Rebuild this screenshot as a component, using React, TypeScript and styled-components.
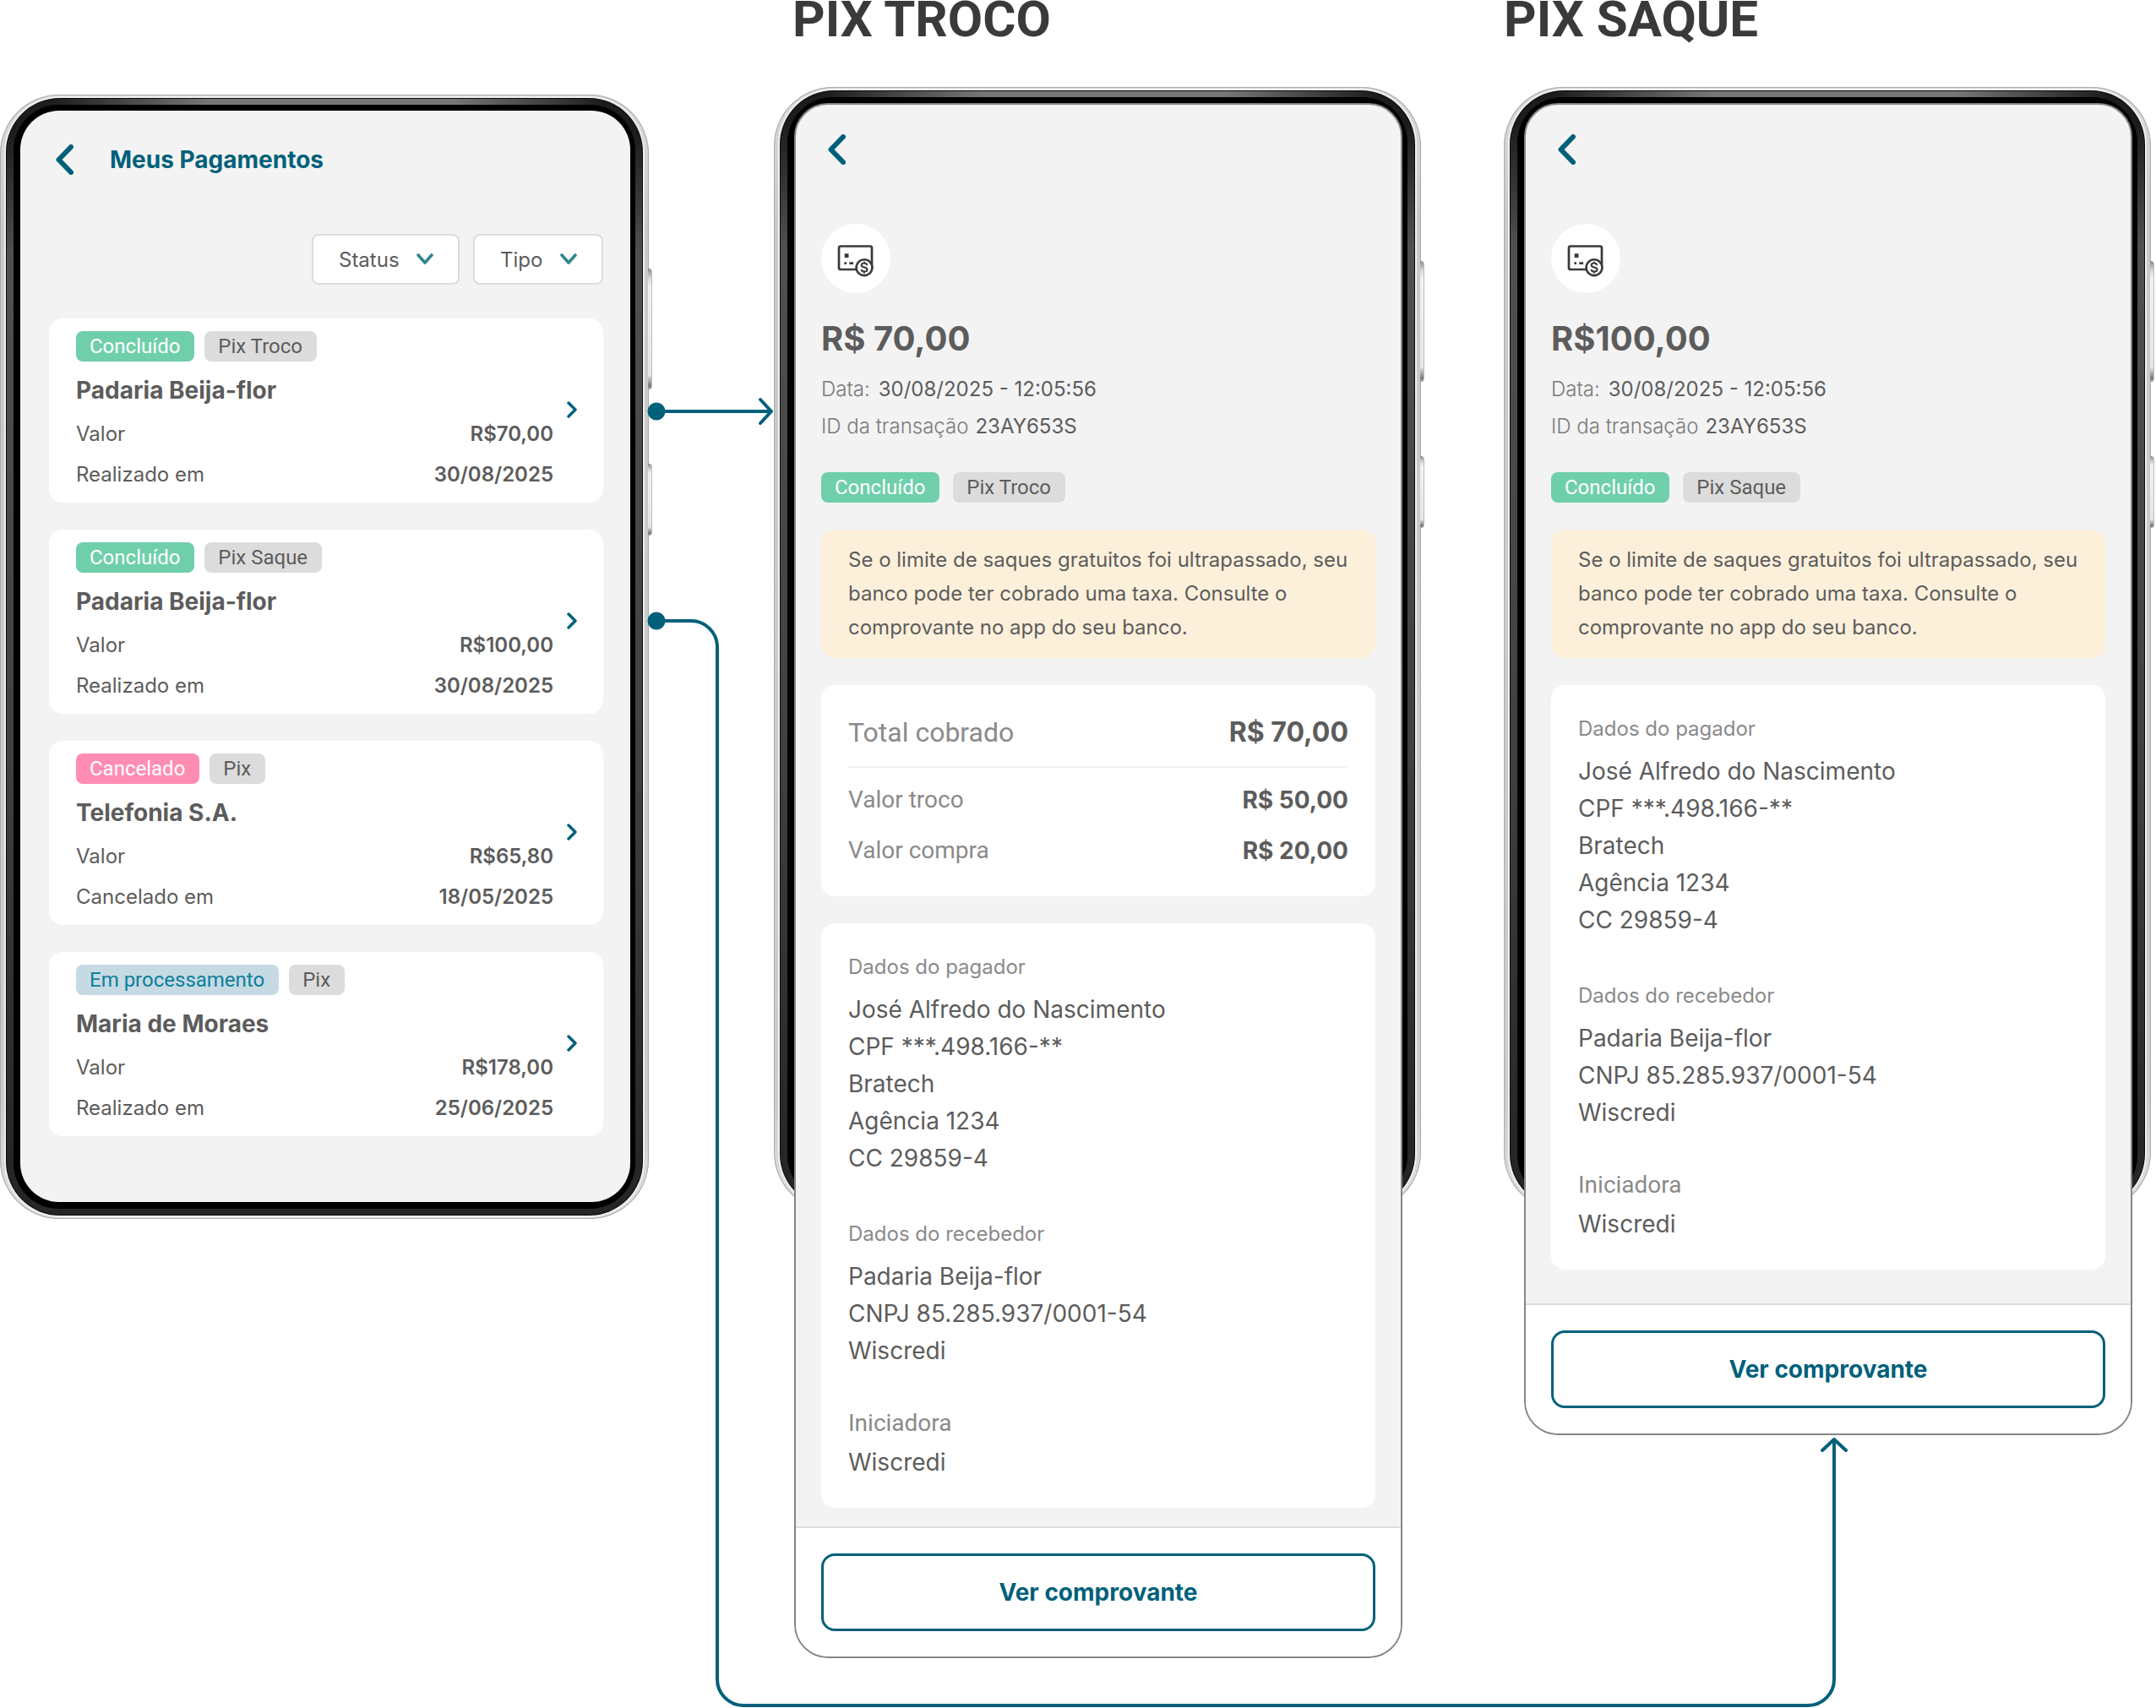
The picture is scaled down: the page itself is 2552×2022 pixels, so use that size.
import React from "react";
import styled, { createGlobalStyle, css } from "styled-components";

const color = {
  brand: "#00607a",
  text: "#5c5c5c",
  soft: "#7a7a7a",
  muted: "#8a8a8a",
  heading: "#3a3a3a",
  surface: "#f3f3f3",
  line: "#dcdcdc",
};

const GlobalStyle = createGlobalStyle`
  *, *::before, *::after { box-sizing: border-box; }
  body {
    margin: 0;
    background: #fff;
    color: ${color.text};
    font-family: Inter, "Liberation Sans", sans-serif;
    font-size: 24px;
  }
  h1, h2, h3, p, dl, dd, ul { margin: 0; padding: 0; }
  button, select { font: inherit; color: inherit; }
`;

/* ---------- board ---------- */

const Board = styled.main`
  position: relative;
  display: grid;
  grid-template-columns: 774fr 142fr 772fr 92fr 772fr;
  align-items: start;
  padding-bottom: 59px;
`;

const Column = styled.section<{ $track: number }>`
  grid-column: ${(p) => p.$track};
  min-width: 0;
  padding-right: 6px;
`;

const ListColumn = styled(Column)`
  padding-top: 112px;
`;

const FlowTitle = styled.h2<{ $indent?: boolean }>`
  margin-bottom: 57px;
  padding-left: ${(p) => (p.$indent ? 22 : 0)}px;
  font-family: Roboto, "Liberation Sans", sans-serif;
  font-size: 60px;
  font-weight: 700;
  line-height: 46px;
  color: ${color.heading};
`;

const Connectors = styled.svg`
  position: absolute;
  inset: 0;
  width: 100%;
  height: 100%;
  pointer-events: none;
`;

/* ---------- phone hardware ---------- */

const Body = styled.div`
  position: relative;
  padding: 4px 7px;
  border-radius: 70px;
  background: linear-gradient(180deg, #dcdcdc, #c9c9c9 12%, #cccccc 90%, #e2e2e2);
  box-shadow: inset 0 0 0 1px #aaa;
`;

const Rim = styled.div`
  height: 100%;
  padding: 8px 9px;
  border-radius: 64px;
  background:
    linear-gradient(90deg, #1c1c1c 7%, #777 32%, #777 70%, #1c1c1c 94%) top / 100% 9px no-repeat,
    linear-gradient(180deg, #1c1c1c 3%, #505050 14%, #404040 60%, #262626 96%);
  box-shadow: 0 0 0 2px #efefef, inset 0 0 0 1px #0a0a0a;
`;

const Glass = styled.div`
  height: 100%;
  padding: 7px 6px 8px 8px;
  border-radius: 54px;
  background: #000;
`;

const SideKey = styled.span<{ $top: number; $length: number }>`
  position: absolute;
  top: ${(p) => p.$top}px;
  right: -4px;
  width: 5px;
  height: ${(p) => p.$length}px;
  border-right: 1px solid #bdbdbd;
  border-radius: 0 4px 4px 0;
  background: linear-gradient(180deg, #8a8a8a, #d8d8d8 8%, #f2f2f2 14%, #e6e6e6 88%, #777 97%, #aaa);
`;

function Bezel({ children, className }: { children?: React.ReactNode; className?: string }) {
  return (
    <Body className={className}>
      <SideKey $top={206} $length={143} />
      <SideKey $top={437} $length={85} />
      <Rim>
        <Glass>{children}</Glass>
      </Rim>
    </Body>
  );
}

/* ---------- shared parts ---------- */

const BackButton = styled.button`
  display: block;
  padding: 0;
  margin-left: 8px;
  border: 0;
  background: none;
  color: ${color.brand};
  cursor: pointer;
  svg { display: block; }
`;

function Back() {
  return (
    <BackButton type="button" aria-label="Voltar">
      <svg width="21" height="36" viewBox="0 0 21 36" fill="none" stroke="currentColor" strokeWidth="6" strokeLinecap="round" strokeLinejoin="round">
        <path d="M18 3 3.5 18 18 33" />
      </svg>
    </BackButton>
  );
}

type Tone = "done" | "canceled" | "pending" | "neutral";

const tones = {
  done: css`background: #6fcfab; color: #fff;`,
  canceled: css`background: #ff8db2; color: #fff;`,
  pending: css`background: #c5dae3; color: #0c7f9c;`,
  neutral: css`background: #dcdcdc; color: ${color.text};`,
};

const Tags = styled.div<{ $gap: number }>`
  display: flex;
  gap: ${(p) => p.$gap}px;
`;

const Tag = styled.span<{ $tone: Tone }>`
  padding: 0 17px 0 16px;
  border-radius: 8px;
  font-family: Roboto, "Liberation Sans", sans-serif;
  font-size: 24px;
  line-height: 36px;
  ${(p) => tones[p.$tone]}
`;

/* ---------- payments list ---------- */

const ListScreen = styled.div`
  padding: 40px 32px 78px 34px;
  border-radius: 46px;
  background: ${color.surface};
`;

const ListHeader = styled.header`
  display: flex;
  align-items: center;
  gap: 43px;
`;

const ScreenTitle = styled.h1`
  font-size: 28px;
  font-weight: 700;
  line-height: 36px;
  color: ${color.brand};
`;

const Filters = styled.div`
  display: flex;
  justify-content: flex-end;
  gap: 16px;
  margin-top: 70px;
`;

const Filter = styled.label`
  display: grid;
  align-items: center;
  > * { grid-area: 1 / 1; }
  svg {
    justify-self: end;
    margin-right: 31px;
    pointer-events: none;
  }
`;

const FilterSelect = styled.select`
  appearance: none;
  height: 60px;
  padding: 0 69px 0 30px;
  border: 2px solid ${color.line};
  border-radius: 8px;
  background: #fff;
  font-size: 24px;
`;

function FilterField({ label }: { label: string }) {
  return (
    <Filter>
      <FilterSelect aria-label={label}>
        <option>{label}</option>
      </FilterSelect>
      <svg width="20" height="14" viewBox="0 0 20 14" fill="none" stroke="#33868c" strokeWidth="3.6" strokeLinecap="round" strokeLinejoin="round">
        <path d="M2 2 10 11 18 2" />
      </svg>
    </Filter>
  );
}

const PaymentList = styled.ul`
  display: grid;
  gap: 32px;
  margin-top: 40px;
  list-style: none;
`;

const PaymentCard = styled.a`
  display: flex;
  align-items: center;
  gap: 16px;
  padding: 15px 31px 17px 32px;
  border-radius: 16px;
  background: #fff;
  color: inherit;
  text-decoration: none;
`;

const PaymentBody = styled.div`
  flex: 1;
  min-width: 0;
`;

const Payee = styled.h3`
  margin: 14px 0 16px;
  font-size: 28px;
  font-weight: 700;
  line-height: 40px;
`;

const Facts = styled.dl`
  display: grid;
  gap: 16px;
`;

const Fact = styled.div`
  display: flex;
  justify-content: space-between;
  font-size: 24px;
  line-height: 32px;
  dd { font-weight: 600; }
`;

interface Payment {
  status: string;
  tone: Tone;
  kind: string;
  payee: string;
  amount: string;
  dateLabel: string;
  date: string;
}

const payments: Payment[] = [
  { status: "Concluído", tone: "done", kind: "Pix Troco", payee: "Padaria Beija-flor", amount: "R$70,00", dateLabel: "Realizado em", date: "30/08/2025" },
  { status: "Concluído", tone: "done", kind: "Pix Saque", payee: "Padaria Beija-flor", amount: "R$100,00", dateLabel: "Realizado em", date: "30/08/2025" },
  { status: "Cancelado", tone: "canceled", kind: "Pix", payee: "Telefonia S.A.", amount: "R$65,80", dateLabel: "Cancelado em", date: "18/05/2025" },
  { status: "Em processamento", tone: "pending", kind: "Pix", payee: "Maria de Moraes", amount: "R$178,00", dateLabel: "Realizado em", date: "25/06/2025" },
];

function PaymentsScreen() {
  return (
    <ListScreen>
      <ListHeader>
        <Back />
        <ScreenTitle>Meus Pagamentos</ScreenTitle>
      </ListHeader>
      <Filters>
        <FilterField label="Status" />
        <FilterField label="Tipo" />
      </Filters>
      <PaymentList>
        {payments.map((p, i) => (
          <li key={i}>
            <PaymentCard href="#">
              <PaymentBody>
                <Tags $gap={12}>
                  <Tag $tone={p.tone}>{p.status}</Tag>
                  <Tag $tone="neutral">{p.kind}</Tag>
                </Tags>
                <Payee>{p.payee}</Payee>
                <Facts>
                  <Fact><dt>Valor</dt><dd>{p.amount}</dd></Fact>
                  <Fact><dt>{p.dateLabel}</dt><dd>{p.date}</dd></Fact>
                </Facts>
              </PaymentBody>
              <svg width="12" height="20" viewBox="0 0 12 20" fill="none" stroke={color.brand} strokeWidth="3.4" strokeLinecap="round" strokeLinejoin="round">
                <path d="M2 2 10 10 2 18" />
              </svg>
            </PaymentCard>
          </li>
        ))}
      </PaymentList>
    </ListScreen>
  );
}

/* ---------- payment detail ---------- */

const DetailPhone = styled.div`
  display: grid;
  align-items: start;
  > * { grid-area: 1 / 1; }
`;

const BackdropBezel = styled(Bezel)`
  height: 1331px;
`;

const Sheet = styled.article`
  position: relative;
  margin: 19px 22px 0 24px;
  border: 2px solid #868686;
  border-radius: 40px;
  background: ${color.surface};
  overflow: hidden;
`;

const SheetContent = styled.div<{ $bottom: number }>`
  padding: 35px 30px ${(p) => p.$bottom}px;
`;

const Medallion = styled.svg`
  display: block;
  margin-top: 70px;
`;

const Amount = styled.h1`
  margin: 30px 0 14px;
  font-size: 40px;
  font-weight: 700;
  line-height: 48px;
`;

const Meta = styled.p<{ $gap: number }>`
  display: flex;
  gap: ${(p) => p.$gap}px;
  font-size: 24px;
  line-height: 44px;
`;

const MetaLabel = styled.span`
  font-weight: 300;
  color: ${color.soft};
`;

const SheetTags = styled(Tags)`
  margin: 32px 0;
`;

const Notice = styled.p`
  padding: 16px 30px 16px 32px;
  border-radius: 16px;
  background: #fcf0db;
  font-size: 24px;
  line-height: 40px;
`;

const Card = styled.section`
  margin-top: 32px;
  padding: 36px 32px 32px;
  border-radius: 16px;
  background: #fff;
`;

const Totals = styled.dl`
  display: grid;
  gap: 24px;
  margin-top: 32px;
  padding: 36px 32px;
  border-radius: 16px;
  background: #fff;
`;

const Total = styled.div<{ $main?: boolean }>`
  display: flex;
  justify-content: space-between;
  font-size: 28px;
  line-height: 36px;
  dt {
    font-family: Roboto, "Liberation Sans", sans-serif;
    color: ${color.muted};
  }
  dd { font-weight: 700; }
  ${(p) =>
    p.$main &&
    css`
      margin-bottom: -4px;
      padding-bottom: 20px;
      border-bottom: 2px solid ${color.surface};
      font-size: 32px;
      line-height: 40px;
    `}
`;

const Party = styled.div<{ $large?: boolean }>`
  margin-top: ${(p) => (p.$large ? 48 : 52)}px;
  &:first-child { margin-top: 0; }
  h3 {
    margin-bottom: ${(p) => (p.$large ? 8 : 12)}px;
    font-family: ${(p) => (p.$large ? `Roboto, "Liberation Sans", sans-serif` : "inherit")};
    font-size: ${(p) => (p.$large ? 28 : 24)}px;
    font-weight: 400;
    line-height: 32px;
    color: ${color.muted};
  }
  p {
    font-size: 28px;
    line-height: 44px;
  }
`;

const SheetFooter = styled.footer`
  padding: 30px;
  border-top: 2px solid ${color.line};
  background: #fff;
`;

const ReceiptButton = styled.button`
  display: block;
  width: 100%;
  height: 92px;
  border: 3px solid ${color.brand};
  border-radius: 16px;
  background: #fff;
  font-size: 28px;
  font-weight: 700;
  color: ${color.brand};
  cursor: pointer;
`;

function CashIcon() {
  return (
    <Medallion width="82" height="82" viewBox="0 0 82 82" fill="none" stroke={color.heading} aria-hidden="true">
      <circle cx="41" cy="41" r="41" fill="#fff" stroke="none" />
      <rect x="21" y="26.5" width="39" height="27.5" rx="2" strokeWidth="2.7" />
      <path d="M27.7 35.3h4.8v4.8h-4.8zM27.4 45.2h2.6v2.8h-2.6zM33.3 45.2h4.8v2.8h-4.8z" fill={color.heading} stroke="none" />
      <circle cx="51" cy="51.7" r="9.4" fill="#fff" strokeWidth="2.6" />
      <path d="M54.4 49.2c-.3-1.7-1.6-2.6-3.4-2.6-2 0-3.3.9-3.3 2.4 0 3.5 6.9 1.5 6.9 5.1 0 1.5-1.5 2.5-3.5 2.5-2 0-3.4-.9-3.7-2.600M51 44.800v1.800M51 56.600v1.900" strokeWidth="2" />
    </Medallion>
  );
}

interface DetailProps {
  amount: string;
  kind: string;
  totals?: { label: string; value: string }[];
  bottom: number;
}

const parties = [
  { label: "Dados do pagador", lines: ["José Alfredo do Nascimento", "CPF ***.498.166-**", "Bratech", "Agência 1234", "CC 29859-4"] },
  { label: "Dados do recebedor", lines: ["Padaria Beija-flor", "CNPJ 85.285.937/0001-54", "Wiscredi"] },
  { label: "Iniciadora", lines: ["Wiscredi"], large: true },
];

function Detail({ amount, kind, totals, bottom }: DetailProps) {
  return (
    <DetailPhone>
      <BackdropBezel />
      <Sheet>
        <SheetContent $bottom={bottom}>
          <Back />
          <CashIcon />
          <Amount>{amount}</Amount>
          <Meta $gap={10}>
            <MetaLabel>Data:</MetaLabel>
            <span>30/08/2025 - 12:05:56</span>
          </Meta>
          <Meta $gap={8}>
            <MetaLabel>ID da transação</MetaLabel>
            <span>23AY653S</span>
          </Meta>
          <SheetTags $gap={16}>
            <Tag $tone="done">Concluído</Tag>
            <Tag $tone="neutral">{kind}</Tag>
          </SheetTags>
          <Notice>
            Se o limite de saques gratuitos foi ultrapassado, seu banco pode ter cobrado uma taxa. Consulte o
            comprovante no app do seu banco.
          </Notice>
          {totals && (
            <Totals>
              {totals.map((t, i) => (
                <Total key={t.label} $main={i === 0}>
                  <dt>{t.label}</dt>
                  <dd>{t.value}</dd>
                </Total>
              ))}
            </Totals>
          )}
          <Card>
            {parties.map((party) => (
              <Party key={party.label} $large={party.large}>
                <h3>{party.label}</h3>
                {party.lines.map((line) => (
                  <p key={line}>{line}</p>
                ))}
              </Party>
            ))}
          </Card>
        </SheetContent>
        <SheetFooter>
          <ReceiptButton type="button">Ver comprovante</ReceiptButton>
        </SheetFooter>
      </Sheet>
    </DetailPhone>
  );
}

const trocoTotals = [
  { label: "Total cobrado", value: "R$ 70,00" },
  { label: "Valor troco", value: "R$ 50,00" },
  { label: "Valor compra", value: "R$ 20,00" },
];

export default function App() {
  return (
    <>
      <GlobalStyle />
      <Board>
        <ListColumn $track={1}>
          <Bezel>
            <PaymentsScreen />
          </Bezel>
        </ListColumn>
        <Column $track={3}>
          <FlowTitle $indent>PIX TROCO</FlowTitle>
          <Detail amount="R$ 70,00" kind="Pix Troco" totals={trocoTotals} bottom={22} />
        </Column>
        <Column $track={5}>
          <FlowTitle>PIX SAQUE</FlowTitle>
          <Detail amount="R$100,00" kind="Pix Saque" bottom={40} />
        </Column>
        <Connectors viewBox="0 0 2552 2022" preserveAspectRatio="none" fill="none" stroke={color.brand} strokeWidth="4" strokeLinecap="round" strokeLinejoin="round" aria-hidden="true">
          <circle cx="777" cy="487" r="10.5" fill={color.brand} stroke="none" />
          <path d="M777 487H912M900 473l13 14-13 14" />
          <circle cx="777" cy="735" r="10.5" fill={color.brand} stroke="none" />
          <path d="M777 735h41a31 31 0 0 1 31 31V1988a31 31 0 0 0 31 31H2140a31 31 0 0 0 31-31V1705M2157 1717l14-13 14 13" />
        </Connectors>
      </Board>
    </>
  );
}
